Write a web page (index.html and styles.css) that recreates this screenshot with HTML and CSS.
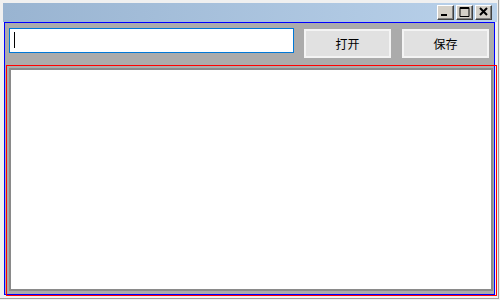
FILE: index.html
```html
<!DOCTYPE html>
<html lang="zh">
<head>
    <meta charset="UTF-8">
    <title>编辑器</title>
    <link rel="stylesheet" href="styles.css">
</head>
<body>
<div class="window">
    <div class="titlebar">
        <div class="cap-btn">
            <svg width="15" height="13" viewBox="0 0 15 13"><rect x="3" y="8" width="6" height="2" fill="#000"/></svg>
        </div>
        <div class="cap-btn">
            <svg width="15" height="13" viewBox="0 0 15 13"><path d="M3 1.5h9v9h-9z M3 2.5h9" fill="none" stroke="#000" stroke-width="1"/><rect x="3" y="1" width="9" height="2" fill="#000"/></svg>
        </div>
        <div class="cap-btn close">
            <svg width="15" height="13" viewBox="0 0 15 13"><path d="M4 2l7 7M11 2l-7 7" stroke="#000" stroke-width="2"/></svg>
        </div>
    </div>
    <div class="client">
        <div class="toolbar">
            <div class="path-input"><span class="caret"></span></div>
            <button class="btn">打开</button>
            <button class="btn">保存</button>
        </div>
        <div class="panel">
            <div class="editor"></div>
        </div>
    </div>
</div>
</body>
</html>
```

FILE: styles.css
```css
* {
    box-sizing: border-box;
    margin: 0;
    padding: 0;
}

body {
    font-family: "Noto Sans CJK SC", "Liberation Sans", sans-serif;
    background: #f0f0f0;
}

.window {
    width: 500px;
    height: 300px;
    padding: 3px;
    background: #f0f0f0;
    box-shadow: inset -1px -1px #f0f0f0, inset -2px -2px #a0a0a0;
}

.titlebar {
    height: 19px;
    display: flex;
    justify-content: flex-end;
    align-items: flex-start;
    gap: 2px;
    padding: 2px 5px 0 0;
    background: linear-gradient(to right, #99b4d1, #b9d1ea);
}

.cap-btn {
    width: 17px;
    height: 15px;
    background: #d4d0c8;
    border: 1px solid;
    border-color: #ffffff #404040 #404040 #ffffff;
    box-shadow: inset -1px -1px #808080;
}

.cap-btn svg {
    display: block;
}

.client {
    width: 491px;
    height: 273px;
    margin-left: 1px;
    border: 1px solid #0000ff;
    background: #ababab;
}

.toolbar {
    height: 42px;
    display: flex;
    align-items: flex-start;
    padding: 5px 0 0 4px;
}

.path-input {
    width: 285px;
    height: 25px;
    background: #fff;
    border: 1px solid #0078d7;
}

.caret {
    display: block;
    width: 1px;
    height: 16px;
    margin: 3px 0 0 4px;
    background: #000;
}

.btn {
    width: 87px;
    height: 29px;
    margin: 1px 0 0 10px;
    background: #e1e1e1;
    border: 2px solid #f4f4f4;
    font-family: "Noto Sans CJK SC", sans-serif;
    font-size: 12px;
    color: #000;
}

.btn + .btn {
    margin-left: 11px;
}

.panel {
    width: 491px;
    height: 231px;
    margin-left: 1px;
    border: 1px solid #ff0000;
    padding: 2px 3px 4px 2px;
    display: flex;
}

.editor {
    flex: 1;
    background: #fff;
    border: 2px solid #8a8a8a;
}
```
